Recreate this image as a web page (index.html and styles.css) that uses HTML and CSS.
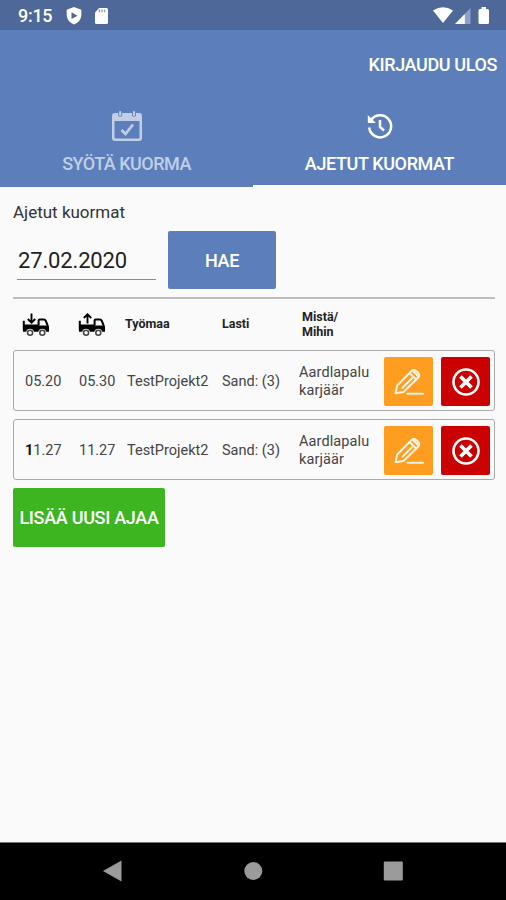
FILE: index.html
```html
<!DOCTYPE html>
<html lang="fi">
<head>
<meta charset="utf-8">
<title>Ajetut kuormat</title>
<link rel="stylesheet" href="styles.css">
</head>
<body>
<svg class="defs" width="0" height="0" aria-hidden="true">
  <symbol id="truck" viewBox="0 0 28 24">
    <path d="M1.800 7.800V17.600M16.600 12.600V7.600Q16.600 6.400 17.800 6.400H21.800Q23.200 6.400 23.800 7.800L25.600 12.400V16" fill="none" stroke="#000" stroke-width="2"/>
    <path d="M1 11.400H16.500V12.400H24L27 13.200V18.800H24.200A4 4 0 0 0 16.400 18.800H12A4 4 0 0 0 4.200 18.800H1Z"/>
    <circle cx="8.100" cy="19.800" r="2.500" fill="none" stroke="#444" stroke-width="1.500"/>
    <circle cx="20.300" cy="19.800" r="2.500" fill="none" stroke="#444" stroke-width="1.500"/>
  </symbol>
  <symbol id="pencil" viewBox="0 0 30 28">
    <g fill="none" stroke="#fff4e6" stroke-width="2" stroke-linejoin="round" stroke-linecap="round">
      <path d="M1.500 25.200 3.200 17.500 17.500 3Q19.800 1 22.200 3L24.200 5Q26.200 7.300 24.300 9.500L9.500 24 1.500 25.200Z"/>
      <path d="M15.800 5.200 22 11.400M19 3 24.500 8.500M8.500 19.800 18 10.300M13.500 25.800H29"/>
    </g>
  </symbol>
  <symbol id="cancel" viewBox="0 0 28 28">
    <circle cx="14" cy="14" r="12.500" fill="none" stroke="#fff" stroke-width="2.600"/>
    <path d="m8.500 8.500 11 11M19.500 8.500l-11 11" stroke="#fff" stroke-width="3.700"/>
  </symbol>
</svg>
<div class="phone">
  <div class="status">
    <span class="clock">9:15</span>
    <svg class="shield" width="16" height="18" viewBox="0 0 16 18"><path fill="#fff" d="M8 0 15.300 2.800V8.500Q15 14.500 8 17.500 1 14.500.7 8.500V2.800Z"/><path d="m5.500 5.200 6 3.500-6 3.400Z" fill="#4e6999"/></svg>
    <svg class="sd" width="13" height="16" viewBox="0 0 13 16"><path fill="#fff" d="M4.200 0H11.500Q13 0 13 1.500V14.500Q13 16 11.500 16H1.500Q0 16 0 14.500V4.500Z"/><path d="M4.500 1.500V4.200M7 1.500V4.200M9.500 1.500V4.200" stroke="#8799b9" stroke-width="1.300"/></svg>
    <svg class="signals" width="58" height="18" viewBox="0 0 58 18"><path fill="#fff" d="M0 3.500Q10-3 20 3.500L10 16Z"/><path fill="#8fa2c4" d="M37.500 1V17H22Z"/><path fill="#fff" d="M31.800 7V17H22Z"/><path fill="#fff" d="M48.500 0H53V2H54.500Q56 2 56 3.500V15.500Q56 17 54.500 17H47Q45.500 17 45.500 15.500V3.500Q45.500 2 47 2H48.500Z"/></svg>
  </div>
  <header>
    <div class="toolbar"><span class="logout">KIRJAUDU ULOS</span></div>
    <nav>
      <div class="tab">
        <svg width="30" height="32" viewBox="0 0 30 32"><path fill="currentColor" fill-rule="evenodd" d="M3 3H6.200V5.500Q8.200 8 10.200 5.500V3H20V5.500Q22 8 24 5.500V3H27Q30 3 30 6V28Q30 31 27 31H3Q0 31 0 28V6Q0 3 3 3ZM2.500 11V27.500Q2.500 28.500 3.500 28.500H26.500Q27.500 28.500 27.500 27.500V11Z"/><path d="M8.200 2V5M22 2V5" stroke="currentColor" stroke-width="2.200" stroke-linecap="round"/><path d="m9.500 20 4 4 7.500-9.500" fill="none" stroke="currentColor" stroke-width="2.800"/></svg>
        <span class="label-enter">SYÖTÄ KUORMA</span>
      </div>
      <div class="tab active">
        <svg width="30" height="32" viewBox="0 0 30 32"><path d="M5.800 10.500A11 11 0 1 1 4.200 17.500" fill="none" stroke="#fff" stroke-width="2.500"/><path fill="#fff" d="M2.800 5V13H10.800Z"/><path d="M15 10V17L19 20.500" fill="none" stroke="#fff" stroke-width="2.500"/></svg>
        <span class="label-done">AJETUT KUORMAT</span>
      </div>
    </nav>
  </header>
  <main>
    <h1>Ajetut kuormat</h1>
    <div class="search"><div class="date">27.02.2020</div><div class="btn fetch">HAE</div></div>
    <div class="grid head">
      <svg width="28" height="24"><use href="#truck"/><path d="M9.500 .5V9M5.800 6 9.500 9.700 13.200 6" fill="none" stroke="#000" stroke-width="1.900"/></svg>
      <svg width="28" height="24"><use href="#truck"/><path d="M9.500 10.500V1.500M5.800 5 9.500 1.300 13.200 5" fill="none" stroke="#000" stroke-width="1.900"/></svg>
      <span class="site">Työmaa</span><span>Lasti</span><span class="route">Mistä/<br>Mihin</span>
    </div>
    <div class="grid row">
      <span class="time">05.20</span><span class="time">05.30</span><span class="project">TestProjekt2</span><span>Sand: (3)</span><span class="place">Aardlapalu<br>karjäär</span>
      <div class="act edit"><svg width="30" height="28"><use href="#pencil"/></svg></div>
      <div class="act del"><svg width="28" height="28"><use href="#cancel"/></svg></div>
    </div>
    <div class="grid row">
      <span class="time"><b>1</b>1.27</span><span class="time">11.27</span><span class="project">TestProjekt2</span><span>Sand: (3)</span><span class="place">Aardlapalu<br>karjäär</span>
      <div class="act edit"><svg width="30" height="28"><use href="#pencil"/></svg></div>
      <div class="act del"><svg width="28" height="28"><use href="#cancel"/></svg></div>
    </div>
    <div class="btn add">LISÄÄ UUSI AJAA</div>
  </main>
  <footer>
    <svg width="20" height="22" viewBox="0 0 20 22"><path d="M0 11 18.500 .5V21.500Z"/></svg>
    <svg width="20" height="22" viewBox="0 0 20 22"><circle cx="10.300" cy="11" r="9"/></svg>
    <svg width="20" height="22" viewBox="0 0 20 22"><rect x=".8" y="1.500" width="19" height="19" rx="1"/></svg>
  </footer>
</div>
</body>
</html>
```

FILE: styles.css
```css
* { box-sizing: border-box; }
body { margin: 0; font-family: Roboto, sans-serif; color: #333; }
svg { display: block; flex: none; }
.defs { display: none; }
.phone { width: 506px; height: 900px; display: flex; flex-direction: column; background: #fafafa; overflow: hidden; }
.status { height: 30px; background: #4e6999; display: flex; align-items: center; padding: 1px 17px 0 18px; color: #fff; }
.clock { font-size: 18px; font-weight: 500; line-height: 30px; width: 48px; letter-spacing: -.3px; }
.sd { margin-left: 13px; }
.signals { margin-left: auto; margin-right: -2px; }
header { height: 157px; background: #5c7fbb; color: #fff; display: flex; flex-direction: column; }
.toolbar { height: 70px; display: flex; align-items: center; justify-content: flex-end; padding-right: 9px; }
.logout { font-size: 18px; font-weight: 500; line-height: 22px; letter-spacing: -.38px; }
nav { display: flex; flex: 1; }
.tab { flex: 1; display: flex; flex-direction: column; align-items: center; padding-top: 10px; color: #c1cee5; font-size: 18px; font-weight: 500; line-height: 22px; gap: 11px; }
.active { color: #fff; border-bottom: 2px solid #fff; }
.label-enter { letter-spacing: -.52px; }
.label-done { letter-spacing: -.38px; }
main { flex: 1; padding: 0 11px 0 13px; }
h1 { margin: 15px 0 0; font-size: 17px; font-weight: 400; line-height: 20px; letter-spacing: 0; color: #333; }
.search { display: flex; margin-top: 9px; height: 58px; }
.date { width: 139px; height: 49px; margin-left: 4px; padding: 16px 1px 0; border-bottom: 1px solid #8c8c8c; font-size: 22px; line-height: 27px; letter-spacing: -.15px; color: #222; }
.btn { display: flex; align-items: center; justify-content: center; border-radius: 2px; color: #fff; font-size: 18px; font-weight: 500; }
.fetch { width: 108px; margin-left: 12px; background: #5c7fbb; letter-spacing: -.3px; }
.grid { display: grid; grid-template-columns: 54px 49px 95px 77px 85px 57px 49px; align-items: center; }
.head { height: 53px; margin-top: 8px; padding-left: 9px; border-top: 2px solid #bdbdbd; grid-template-columns: 56px 47px 97px 80px 90px; color: #222; font-size: 12.500px; font-weight: 700; line-height: 15px; }
.head span { margin-top: -2px; }
.row { height: 61px; padding: 2px 0 0 10px; border: 1px solid #aaa; border-radius: 3px; margin-bottom: 8px; font-size: 14.500px; line-height: 18px; color: #444; }
.row b { color: #111; }
.time { padding-left: 1px; }
.place { letter-spacing: .1px; }
.act { width: 49px; height: 49px; border-radius: 2px; display: flex; align-items: center; justify-content: center; }
.edit { background: #ff9d20; }
.del { background: #cb0000; }
.add { width: 152px; height: 59px; background: #3cb521; letter-spacing: -.3px; }
footer { height: 58px; background: #000; border-top: 1px solid #777; display: flex; gap: 120px; align-items: center; padding: 0 0 2px 103px; fill: #9b9b9b; }
```
